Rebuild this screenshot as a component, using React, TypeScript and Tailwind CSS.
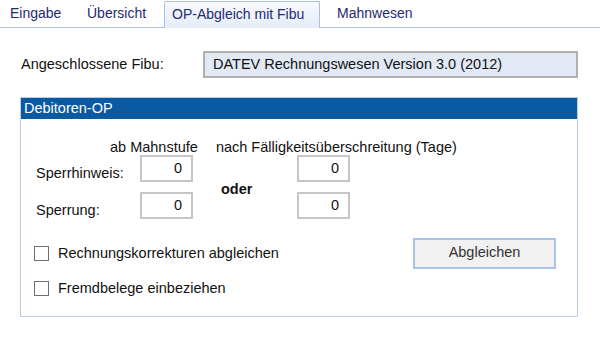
import React from "react";

function Tab({ label, active, className }: { label: string; active?: boolean; className: string }) {
  if (active) {
    return (
      <div
        className={`h-[27px] mb-[-1px] flex items-center border border-b-0 border-[#a9c0df] rounded-t-[2px] bg-gradient-to-b from-[#f7f9fd] to-[#e6edf8] text-[#252a72] ${className}`}
      >
        <span className="pb-[1px]">{label}</span>
      </div>
    );
  }
  return (
    <div className={`h-[26px] flex items-center text-[#252a72] ${className}`}>
      <span className="pb-[1px]">{label}</span>
    </div>
  );
}

function NumBox({ value }: { value: string }) {
  return (
    <div className="h-[27px] w-[53px] border-2 border-[#c6c6c6] bg-white flex items-center justify-end pr-[9px] leading-none">
      {value}
    </div>
  );
}

function Check({ label }: { label: string }) {
  return (
    <div className="flex items-center">
      <div className="w-[15px] h-[15px] border border-[#707070] bg-white" />
      <span className="ml-[9px]">{label}</span>
    </div>
  );
}

export default function App() {
  return (
    <div className="w-[600px] h-[345px] bg-white font-['Liberation_Sans',Arial,sans-serif] text-[14.5px] text-[#111] overflow-hidden">
      {/* Tab bar */}
      <div className="h-[28px] border-b border-[#a9c0df] flex items-end text-[14px]">
        <Tab label="Eingabe" className="ml-[2px] w-[78px] pl-[8px]" />
        <Tab label="Übersicht" className="w-[84px] pl-[7px]" />
        <Tab label="OP-Abgleich mit Fibu" active className="w-[156px] pl-[7px]" />
        <Tab label="Mahnwesen" className="w-[100px] pl-[17px]" />
      </div>

      {/* Fibu row */}
      <div className="flex items-center mt-[23px] pl-[21px]">
        <span className="w-[182px]">Angeschlossene Fibu:</span>
        <div className="w-[375px] h-[27px] border-2 border-[#b0b0b0] bg-[#e2e9f5] flex items-center pl-[8px] pt-[1px]">
          DATEV Rechnungswesen Version 3.0 (2012)
        </div>
      </div>

      {/* Group */}
      <div className="ml-[20px] mt-[19px] w-[558px] h-[220px] border border-[#b9cde6] flex flex-col">
        <div className="h-[21px] bg-[#0a5aa3] text-white flex items-center pl-[3px]">Debitoren-OP</div>

        <div className="flex pl-[89px] mt-[20px] leading-[16px]">
          <span>ab Mahnstufe</span>
          <span className="ml-[18px]">nach Fälligkeitsüberschreitung (Tage)</span>
        </div>

        <div className="grid grid-cols-[104px_53px_104px_53px] grid-rows-[27px_27px] gap-y-[10px] ml-[15px] mt-[0px]">
          <span className="self-end mb-[1px] leading-[16px]">Sperrhinweis:</span>
          <NumBox value="0" />
          <span className="row-span-2 self-center pl-[28px] mt-[6px] font-bold">oder</span>
          <NumBox value="0" />
          <span className="self-end mb-[1px] leading-[16px]">Sperrung:</span>
          <NumBox value="0" />
          <NumBox value="0" />
        </div>

        <div className="flex items-center justify-between pl-[13px] pr-[21px] mt-[19px]">
          <Check label="Rechnungskorrekturen abgleichen" />
          <div className="w-[143px] h-[31px] border-2 border-[#a8c3e4] bg-[#f1f1f1] text-[#333] flex items-center justify-center pb-[2px]">
            Abgleichen
          </div>
        </div>

        <div className="pl-[13px] mt-[9px]">
          <Check label="Fremdbelege einbeziehen" />
        </div>
      </div>
    </div>
  );
}
